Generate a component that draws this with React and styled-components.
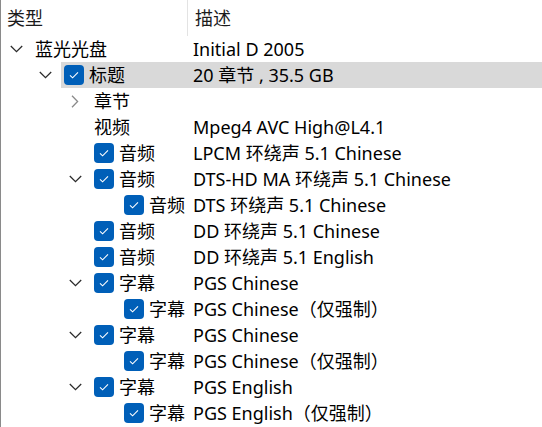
import React from "react";
import styled, { createGlobalStyle } from "styled-components";

const Global = createGlobalStyle`
  html, body { margin: 0; padding: 0; background: #fff; }
  body { font-family: "Noto Sans", "Noto Sans CJK SC", sans-serif; }
`;

const Tree = styled.div`
  width: 542px;
  height: 427px;
  box-sizing: border-box;
  border-left: 1px solid #8a8a8a;
  background: #fff;
  overflow: hidden;
  font-family: "Noto Sans", "Noto Sans CJK SC", sans-serif;
  font-size: 18px;
  color: #000;
`;

const Header = styled.div`
  display: flex;
  height: 36px;
  align-items: stretch;
`;

const HeaderCell = styled.div`
  display: flex;
  align-items: center;
  box-sizing: border-box;
  width: ${(p) => (p.$width ? `${p.$width}px` : "auto")};
  flex: ${(p) => (p.$width ? "none" : "1")};
  padding-left: ${(p) => p.$pad}px;
  padding-bottom: 2px;
  border-right: ${(p) => (p.$divider ? "1px solid #e3e3e3" : "none")};
  color: #1b1b1b;
`;

const Row = styled.div`
  display: flex;
  align-items: center;
  height: 26px;
  background: ${(p) =>
    p.$selected
      ? `linear-gradient(to right, transparent ${p.$level * 30 + 30}px, #d9d9d9 ${p.$level * 30 + 30}px)`
      : "transparent"};
`;

const NameCell = styled.div`
  display: flex;
  align-items: center;
  width: 187px;
  flex: none;
  padding-left: ${(p) => p.$level * 30 - 1}px;
  box-sizing: border-box;
  white-space: nowrap;
`;

const Expander = styled.span`
  width: 30px;
  height: 26px;
  flex: none;
  display: flex;
  align-items: center;
  justify-content: center;
  margin-right: 4px;
  color: ${(p) => (p.$open ? "#2b2b2b" : "#8a8a8a")};
`;

const Check = styled.span`
  width: 20px;
  height: 20px;
  flex: none;
  border-radius: 4px;
  background: #005fb8;
  display: flex;
  align-items: center;
  justify-content: center;
  margin-right: 5px;
`;

const Label = styled.span`
  line-height: 26px;
`;

const DescCell = styled.div`
  flex: 1;
  padding-left: 5px;
  white-space: nowrap;
  line-height: 26px;
`;

function Chevron({ open }) {
  return open ? (
    <svg width="13" height="8" viewBox="0 0 13 8">
      <path d="M0.8 1 L6.5 6.6 L12.2 1" fill="none" stroke="currentColor" strokeWidth="1.3" />
    </svg>
  ) : (
    <svg width="8" height="13" viewBox="0 0 8 13">
      <path d="M1 0.8 L6.6 6.5 L1 12.2" fill="none" stroke="currentColor" strokeWidth="1.3" />
    </svg>
  );
}

function CheckMark() {
  return (
    <svg width="12" height="10" viewBox="0 0 12 10">
      <path d="M2 5.3 L4.6 7.8 L10 2.4" fill="none" stroke="#fff" strokeWidth="1.1" />
    </svg>
  );
}

const rows = [
  { level: 0, exp: "open", name: "蓝光光盘", desc: "Initial D 2005" },
  { level: 1, exp: "open", check: true, name: "标题", desc: "20 章节 , 35.5 GB", selected: true },
  { level: 2, exp: "closed", name: "章节", desc: "" },
  { level: 2, name: "视频", desc: "Mpeg4 AVC High@L4.1" },
  { level: 2, check: true, name: "音频", desc: "LPCM 环绕声 5.1 Chinese" },
  { level: 2, exp: "open", check: true, name: "音频", desc: "DTS-HD MA 环绕声 5.1 Chinese" },
  { level: 3, check: true, name: "音频", desc: "DTS 环绕声 5.1 Chinese" },
  { level: 2, check: true, name: "音频", desc: "DD 环绕声 5.1 Chinese" },
  { level: 2, check: true, name: "音频", desc: "DD 环绕声 5.1 English" },
  { level: 2, exp: "open", check: true, name: "字幕", desc: "PGS Chinese" },
  { level: 3, check: true, name: "字幕", desc: "PGS Chinese（仅强制）" },
  { level: 2, exp: "open", check: true, name: "字幕", desc: "PGS Chinese" },
  { level: 3, check: true, name: "字幕", desc: "PGS Chinese（仅强制）" },
  { level: 2, exp: "open", check: true, name: "字幕", desc: "PGS English" },
  { level: 3, check: true, name: "字幕", desc: "PGS English（仅强制）" },
];

export default function App() {
  return (
    <>
      <Global />
      <Tree>
        <Header>
          <HeaderCell $width={187} $pad={6} $divider>
            类型
          </HeaderCell>
          <HeaderCell $pad={7}>描述</HeaderCell>
        </Header>
        {rows.map((r, i) => (
          <Row key={i} $level={r.level} $selected={r.selected}>
            <NameCell $level={r.level}>
              <Expander $open={r.exp === "open"}>
                {r.exp ? <Chevron open={r.exp === "open"} /> : null}
              </Expander>
              {r.check ? (
                <Check>
                  <CheckMark />
                </Check>
              ) : null}
              <Label>{r.name}</Label>
            </NameCell>
            <DescCell>{r.desc}</DescCell>
          </Row>
        ))}
      </Tree>
    </>
  );
}
